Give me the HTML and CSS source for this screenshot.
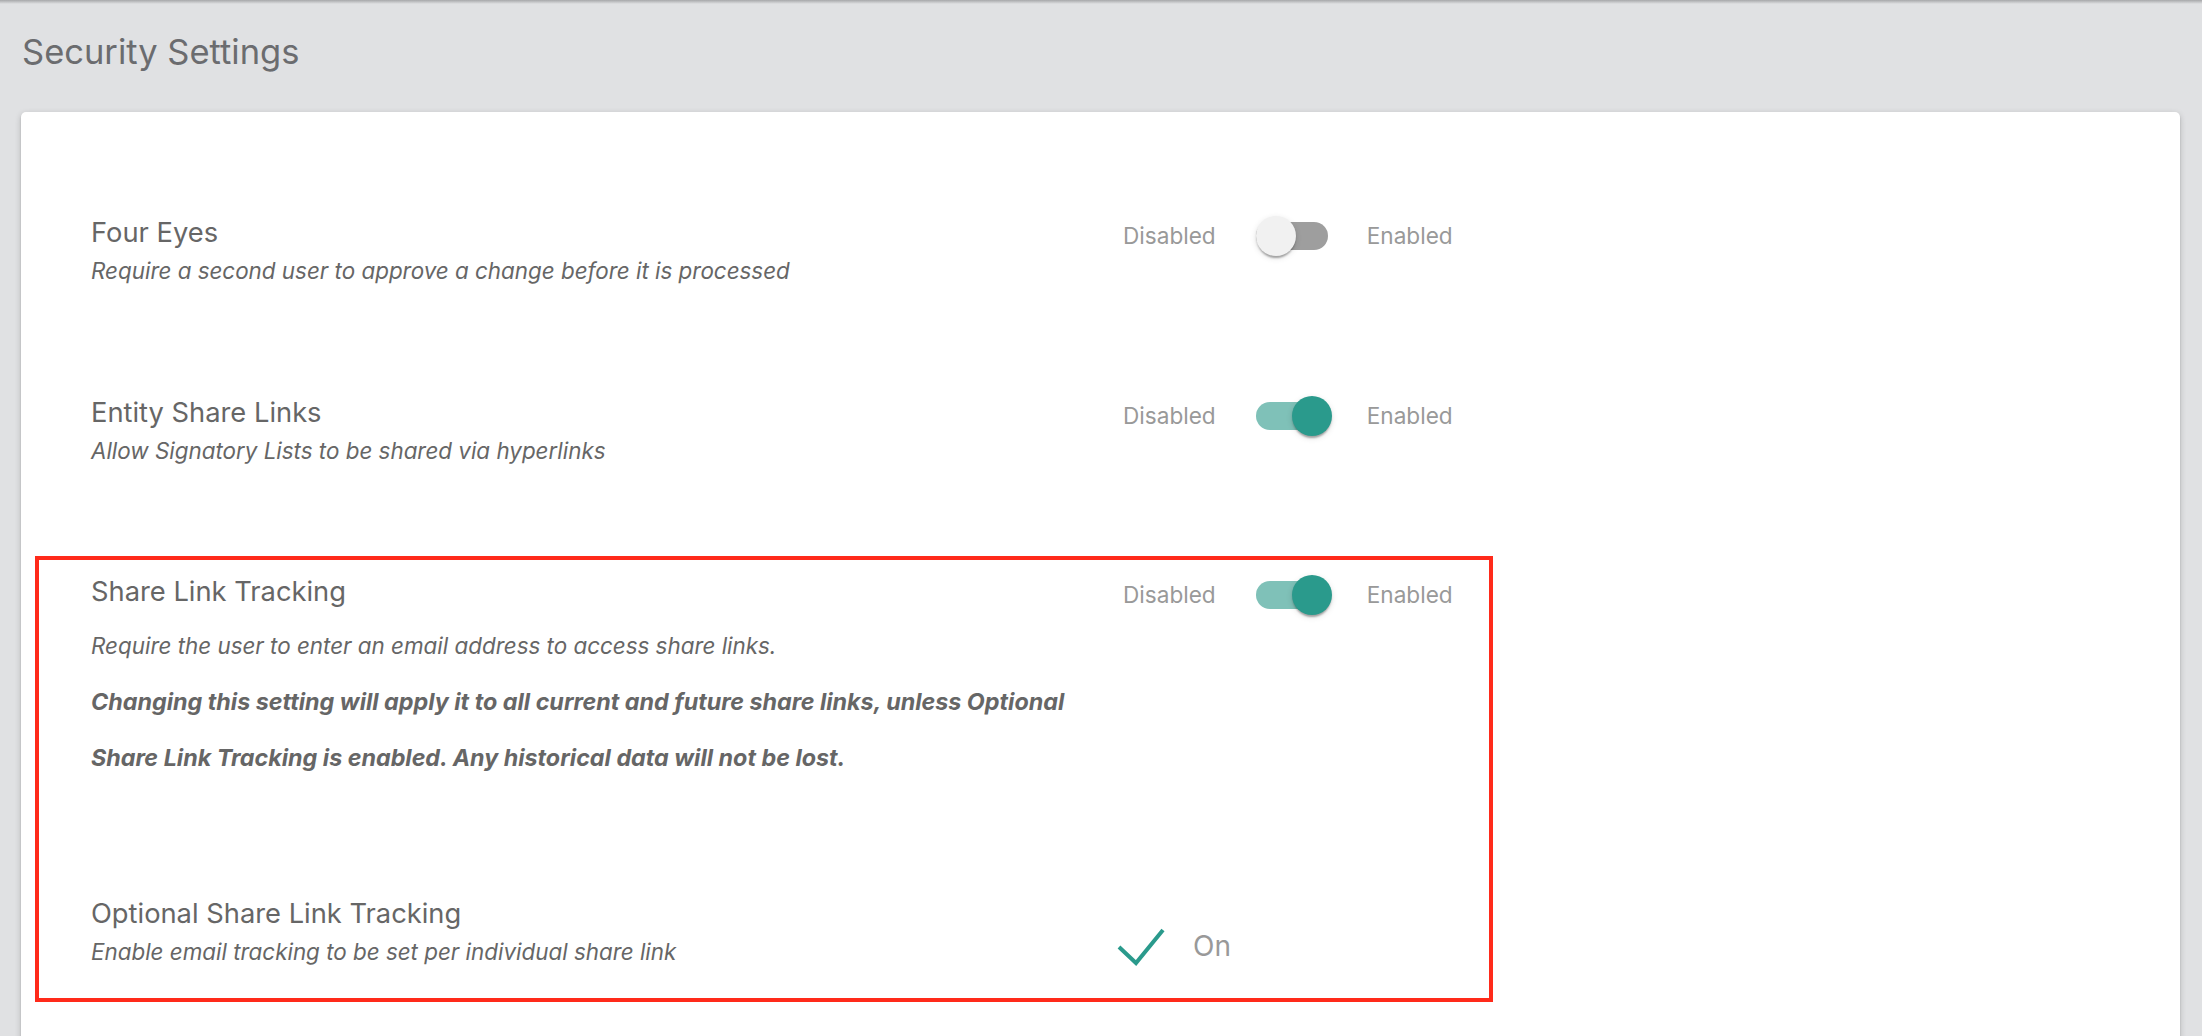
FILE: index.html
```html
<!DOCTYPE html>
<html lang="en">
<head>
<meta charset="utf-8">
<title>Security Settings</title>
<link rel="stylesheet" href="styles.css">
</head>
<body>
<div class="topshadow"></div>
<h1 class="page-title">Security Settings</h1>
<div class="card">
  <div class="setting">
    <div class="info">
      <div class="name">Four Eyes</div>
      <div class="desc">Require a second user to approve a change before it is processed</div>
    </div>
    <div class="control">
      <span class="state">Disabled</span>
      <span class="toggle"><span class="track"></span><span class="thumb"></span></span>
      <span class="state">Enabled</span>
    </div>
  </div>
  <div class="setting">
    <div class="info">
      <div class="name">Entity Share Links</div>
      <div class="desc">Allow Signatory Lists to be shared via hyperlinks</div>
    </div>
    <div class="control">
      <span class="state">Disabled</span>
      <span class="toggle on"><span class="track"></span><span class="thumb"></span></span>
      <span class="state">Enabled</span>
    </div>
  </div>
  <div class="highlight">
    <div class="setting">
      <div class="info">
        <div class="name">Share Link Tracking</div>
        <div class="desc tall first">Require the user to enter an email address to access share links.</div>
        <div class="desc tall strong">Changing this setting will apply it to all current and future share links, unless Optional<br>Share Link Tracking is enabled. Any historical data will not be lost.</div>
      </div>
      <div class="control">
        <span class="state">Disabled</span>
        <span class="toggle on"><span class="track"></span><span class="thumb"></span></span>
        <span class="state">Enabled</span>
      </div>
    </div>
    <div class="setting">
      <div class="info">
        <div class="name">Optional Share Link Tracking</div>
        <div class="desc">Enable email tracking to be set per individual share link</div>
      </div>
      <div class="control checked">
        <svg class="check" width="48" height="40" viewBox="0 0 48 40" aria-hidden="true">
          <polyline points="2,21 19,37 46,4" fill="none" stroke="#2a9a8c" stroke-width="4"/>
        </svg>
        <span class="on-label">On</span>
      </div>
    </div>
  </div>
</div>
</body>
</html>
```

FILE: styles.css
```css
html, body {
  margin: 0;
  padding: 0;
}
body {
  background: #e0e1e3;
  font-family: Inter, "Noto Sans", Roboto, sans-serif;
  color: #666;
  overflow: hidden;
  height: 1036px;
}
.topshadow {
  height: 4px;
  background: linear-gradient(#a6a7a9, #e0e1e3);
}
.page-title {
  margin: 26px 0 38px 22px;
  font-size: 34.5px;
  line-height: 44px;
  font-weight: 400;
  color: #6b6c6f;
}
.card {
  margin: 0 22px 0 21px;
  background: #fff;
  border-radius: 5px;
  box-shadow: 0 2px 6px rgba(0, 0, 0, 0.2), 0 2px 2px rgba(0, 0, 0, 0.14), 0 4px 2px -2px rgba(0, 0, 0, 0.12);
  padding: 103px 0 0 70px;
  min-height: 1000px;
}
.setting {
  display: flex;
  align-items: flex-start;
}
.setting + .setting {
  margin-top: 108px;
}
.highlight .setting + .setting {
  margin-top: 110px;
}
.info {
  width: 1032px;
  flex: none;
}
.name {
  font-size: 27.3px;
  line-height: 36px;
  color: #666;
}
.desc {
  margin-top: 4px;
  font-size: 22.4px;
  line-height: 32px;
  font-style: italic;
  color: #666;
}
.desc.tall {
  line-height: 56px;
  margin-top: 0;
}
.desc.first {
  margin-top: 8px;
}
.desc.strong {
  font-weight: 700;
  font-size: 23.3px;
}
.control {
  display: flex;
  align-items: center;
  height: 40px;
  margin-top: 1px;
}
.state {
  font-size: 22.6px;
  line-height: 40px;
  color: #999;
}
.toggle {
  position: relative;
  width: 72px;
  height: 40px;
  margin: 0 39px 0 40px;
}
.track {
  position: absolute;
  left: 0;
  top: 6px;
  width: 72px;
  height: 28px;
  border-radius: 14px;
  background: #9e9e9e;
}
.thumb {
  position: absolute;
  left: 0;
  top: 0;
  width: 40px;
  height: 40px;
  border-radius: 50%;
  background: #f1f1f1;
  box-shadow: 0 4px 2px -2px rgba(0, 0, 0, 0.2), 0 2px 2px 0 rgba(0, 0, 0, 0.14), 0 2px 6px 0 rgba(0, 0, 0, 0.12);
}
.toggle.on .track {
  background: #7fc1b8;
}
.toggle.on .thumb {
  left: 36px;
  background: #2a9a8c;
}
.highlight {
  margin: 89px 0 0 -56px;
  border: 4px solid #ff2a1a;
  padding: 14px 0 30px 52px;
  width: 1398px;
}
.control.checked {
  margin-top: 30px;
  margin-left: -6px;
}
.check {
  display: block;
}
.on-label {
  margin-left: 28px;
  font-size: 28px;
  line-height: 40px;
  color: #999;
}
```
